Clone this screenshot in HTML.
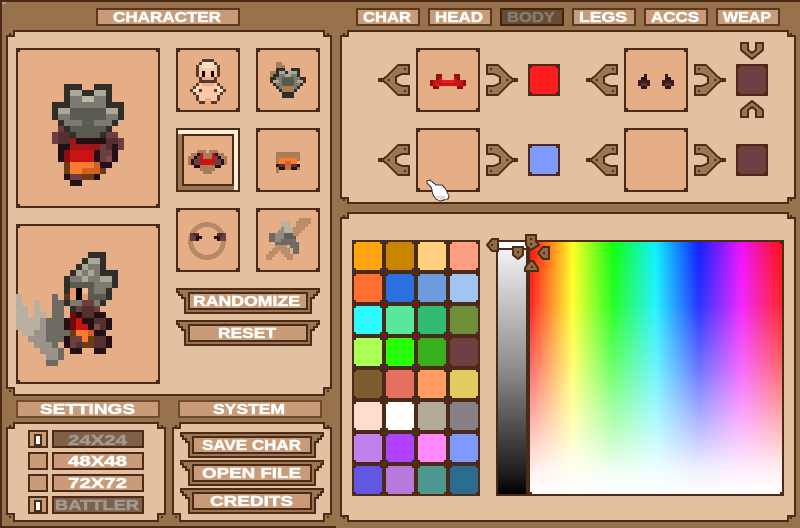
<!DOCTYPE html>
<html>
<head>
<meta charset="utf-8">
<title>Character</title>
<style>
html,body{margin:0;padding:0;width:800px;height:528px;overflow:hidden;background:#97724d}
svg{display:block}
text{font-family:"Liberation Sans",sans-serif;font-weight:bold;font-size:15px;fill:#fff;stroke:#fff;stroke-width:.5px}
text.g{fill:#a09a94;stroke:#a09a94}
text.b{fill:#857b6e;stroke:#857b6e}
path{fill:none}
</style>
</head>
<body>
<svg width="800" height="528" viewBox="0 0 800 528" xmlns="http://www.w3.org/2000/svg">
<defs>
<linearGradient id="gy" x1="0" y1="0" x2="0" y2="1">
<stop offset="0" stop-color="#f2f2f6"/><stop offset=".25" stop-color="#bdbdbd"/><stop offset=".5" stop-color="#8a8a8a"/><stop offset=".75" stop-color="#484848"/><stop offset=".92" stop-color="#1c1c1c"/><stop offset="1" stop-color="#000"/>
</linearGradient>
<linearGradient id="hue" x1="0" y1="0" x2="1" y2="0">
<stop offset="0" stop-color="#ff1010"/><stop offset=".17" stop-color="#ffff20"/><stop offset=".33" stop-color="#10ff10"/><stop offset=".5" stop-color="#10f0ff"/><stop offset=".67" stop-color="#1020ff"/><stop offset=".84" stop-color="#f010ff"/><stop offset="1" stop-color="#ff1010"/>
</linearGradient>
<linearGradient id="fade" x1="0" y1="0" x2="0" y2="1">
<stop offset="0" stop-color="#fff" stop-opacity="0"/><stop offset=".25" stop-color="#fff" stop-opacity=".1"/><stop offset=".5" stop-color="#fff" stop-opacity=".38"/><stop offset=".75" stop-color="#fff" stop-opacity=".72"/><stop offset=".9" stop-color="#fff" stop-opacity=".93"/><stop offset="1" stop-color="#fff" stop-opacity="1"/>
</linearGradient>
<pattern id="cn" x="352" y="240" width="32" height="32" patternUnits="userSpaceOnUse">
<rect x="2" y="2" width="2" height="2" fill="#4b2b17"/><rect x="28" y="2" width="2" height="2" fill="#4b2b17"/><rect x="2" y="28" width="2" height="2" fill="#4b2b17"/><rect x="28" y="28" width="2" height="2" fill="#4b2b17"/>
</pattern>
<g id="ban" shape-rendering="crispEdges">
<polygon points="1,1 143,1 143,4 141,4 141,7 138,7 138,10 135,10 135,25 9,25 9,10 6,10 6,7 3,7 3,4 1,4" fill="#9b7650" stroke="#4b2b17" stroke-width="2"/>
<rect x="13" y="5" width="118" height="16" fill="#c99b79" stroke="#4b2b17" stroke-width="2"/>
</g>
<g id="arr" shape-rendering="crispEdges">
<polygon points="20,1 31,1 31,10 24,10 18,13 18,19 24,22 31,22 31,31 20,31 17,28 14,25 11,22 8,19 5,17 1,17 1,15 5,15 8,13 11,10 14,7 17,4" fill="#9b7650" stroke="#4b2b17" stroke-width="2"/>
<rect x="26" y="4" width="2" height="2" fill="#4b2b17"/><rect x="26" y="26" width="2" height="2" fill="#4b2b17"/><rect x="10" y="15" width="2" height="2" fill="#4b2b17"/>
</g>
</defs>

<g shape-rendering="crispEdges">
<rect width="800" height="528" fill="#97724d"/>
<rect width="800" height="2" fill="#4b2b17"/>
<rect width="2" height="528" fill="#4b2b17"/>
<rect y="526" width="336" height="2" fill="#4b2b17"/>
<rect x="2" y="2" width="4" height="2" fill="#c49a72"/>

<!-- panels -->
<g fill="#e3c1a0" stroke="#4b2b17" stroke-width="2">
<polygon points="14,31 324,31 324,36 331,36 331,388 324,388 324,395 14,395 14,388 7,388 7,36 14,36"/>
<polygon points="14,423 158,423 158,428 165,428 165,514 158,514 158,521 14,521 14,514 7,514 7,428 14,428"/>
<polygon points="180,423 324,423 324,428 331,428 331,514 324,514 324,521 180,521 180,514 173,514 173,428 180,428"/>
<polygon points="347,31 787,31 787,36 794,36 794,198 787,198 787,203 347,203 347,198 340,198 340,36 347,36" transform="translate(1 0)"/>
<polygon points="347,213 787,213 787,218 794,218 794,516 787,516 787,521 347,521 347,516 340,516 340,218 347,218" transform="translate(1 0)"/>
</g>
<g fill="#4b2b17">
<rect x="9" y="33" width="2" height="2"/><rect x="327" y="33" width="2" height="2"/><rect x="9" y="390" width="2" height="2"/><rect x="327" y="390" width="2" height="2"/>
<rect x="9" y="425" width="2" height="2"/><rect x="161" y="425" width="2" height="2"/><rect x="9" y="516" width="2" height="2"/><rect x="161" y="516" width="2" height="2"/>
<rect x="175" y="425" width="2" height="2"/><rect x="327" y="425" width="2" height="2"/><rect x="175" y="516" width="2" height="2"/><rect x="327" y="516" width="2" height="2"/>
<rect x="343" y="33" width="2" height="2"/><rect x="790" y="33" width="2" height="2"/><rect x="343" y="199" width="2" height="2"/><rect x="790" y="199" width="2" height="2"/>
<rect x="343" y="215" width="2" height="2"/><rect x="790" y="215" width="2" height="2"/><rect x="343" y="517" width="2" height="2"/><rect x="790" y="517" width="2" height="2"/>
</g>

<!-- title and tabs -->
<g fill="#c99b79" stroke="#5a3820" stroke-width="2">
<rect x="97" y="9" width="142" height="16"/>
<rect x="357" y="9" width="62" height="16"/>
<rect x="429" y="9" width="62" height="16"/>
<rect x="573" y="9" width="62" height="16"/>
<rect x="645" y="9" width="62" height="16"/>
<rect x="717" y="9" width="62" height="16"/>
<rect x="17" y="401" width="142" height="16" stroke="#704a2c"/>
<rect x="179" y="401" width="142" height="16" stroke="#704a2c"/>
</g>
<rect x="501" y="9" width="62" height="16" fill="#6a4a30" stroke="#3f2412" stroke-width="2"/>

<!-- slots -->
<g fill="#e5ae87" stroke="#4b2b17" stroke-width="2">
<rect x="17" y="49" width="142" height="158"/>
<rect x="17" y="225" width="142" height="158"/>
<rect x="177" y="49" width="62" height="62"/>
<rect x="257" y="49" width="62" height="62"/>
<rect x="257" y="129" width="62" height="62"/>
<rect x="177" y="209" width="62" height="62"/>
<rect x="257" y="209" width="62" height="62"/>
<rect x="417" y="49" width="62" height="62"/>
<rect x="417" y="129" width="62" height="62"/>
<rect x="625" y="49" width="62" height="62"/>
<rect x="625" y="129" width="62" height="62"/>
</g>
<g fill="#4b2b17">
<rect x="18" y="50" width="2" height="2"/><rect x="156" y="50" width="2" height="2"/><rect x="18" y="204" width="2" height="2"/><rect x="156" y="204" width="2" height="2"/>
<rect x="18" y="226" width="2" height="2"/><rect x="156" y="226" width="2" height="2"/><rect x="18" y="380" width="2" height="2"/><rect x="156" y="380" width="2" height="2"/>
</g>
<path stroke="#4b2b17" stroke-width="2" d="M178 51h2M236 51h2M178 109h2M236 109h2M258 51h2M316 51h2M258 109h2M316 109h2M258 131h2M316 131h2M258 189h2M316 189h2M178 211h2M236 211h2M178 269h2M236 269h2M258 211h2M316 211h2M258 269h2M316 269h2M418 51h2M476 51h2M418 109h2M476 109h2M418 131h2M476 131h2M418 189h2M476 189h2M626 51h2M684 51h2M626 109h2M684 109h2M626 131h2M684 131h2M626 189h2M684 189h2"/>

<!-- selected slot -->
<rect x="176" y="128" width="64" height="64" fill="#4b2b17"/>
<rect x="178" y="130" width="60" height="60" fill="#9b7650"/>
<polygon points="178,130 238,130 238,190 234,190 234,134 178,134" fill="#fff0dc"/>
<rect x="183" y="135" width="50" height="50" fill="#e5ae87" stroke="#4b2b17" stroke-width="2"/>

<!-- large sprite front -->
<g transform="translate(52 84) scale(6)">
<path stroke="#2f2e2a" d="M2 .5h3M7 .5h3M2 1.5h1M5 1.5h2M9 1.5h1M2 2.5h1M9 2.5h1M0 3.5h3M9 3.5h3M0 4.5h1M11 4.5h1M0 5.5h1M11 5.5h1M1 6.5h1M10 6.5h1M2 7.5h1M9 7.5h1M3 8.5h1M8 8.5h1"/>
<path stroke="#aaa698" d="M3 1.5h2M7 1.5h2M1 4.5h2M9 4.5h2"/>
<path stroke="#bdb7a7" d="M5 2.5h2"/>
<path stroke="#7d7b6f" d="M3 2.5h2M7 2.5h2M3 3.5h6M1 5.5h2M9 5.5h2M2 6.5h3M7 6.5h3"/>
<path stroke="#5b5a50" d="M3 4.5h6M3 5.5h6M5 6.5h2M3 7.5h6M4 8.5h4"/>
<path stroke="#6b3f3f" d="M1 7.5h1M0 8.5h1M9 8.5h2M0 9.5h1M11 9.5h1M11 10.5h1M8 10.5h1M8 11.5h2M8 12.5h1M3 15.5h2"/>
<path stroke="#543030" d="M1 8.5h2M1 9.5h2M9 9.5h2M9 10.5h1"/>
<path stroke="#241014" d="M1 10.5h2M1 11.5h1M1 12.5h1M4 9.5h5M10 10.5h1M7 11.5h1M7 12.5h1M10 11.5h1M10 12.5h1M8 13.5h2M2 15.5h1M7 15.5h1M3 16.5h2"/>
<path stroke="#a01616" d="M3 9.5h1M3 10.5h5"/>
<path stroke="#cc1212" d="M3 11.5h4M3 12.5h4"/>
<path stroke="#8c0f0f" d="M2 11.5h1M2 12.5h1"/>
<path stroke="#6e3a16" d="M2 13.5h1M2 14.5h1M8 14.5h1M5 15.5h2"/>
<path stroke="#ff7a2e" d="M3 13.5h4M3 14.5h2"/>
<path stroke="#d06020" d="M7 13.5h1M5 14.5h3"/>
<path stroke="#7e4a4a" d="M9 12.5h1"/>
</g>

<!-- large sprite side -->
<g transform="translate(16 252) scale(6)">
<path stroke="#b8b0a0" d="M0 7.5h1M0 8.5h1M3 8.5h1M0 9.5h2M3 9.5h1M0 10.5h2M3 10.5h2M0 11.5h4M0 12.5h4M1 13.5h2"/>
<path stroke="#99938a" d="M4 11.5h1M4 12.5h1M3 13.5h2M2 14.5h3M3 15.5h3M4 16.5h3M5 17.5h2"/>
<path stroke="#6e6c62" d="M6 7.5h1M6 8.5h2M6 9.5h2M6 10.5h2M5 11.5h3M5 12.5h3M5 13.5h4M5 14.5h4M6 15.5h1M7 16.5h1M7 17.5h1M5 18.5h2"/>
<path stroke="#2f2e2a" d="M12 .5h3M11 1.5h1M14 1.5h1M10 2.5h1M14 2.5h1M9 3.5h1M14 3.5h3M8 4.5h1M16 4.5h1M8 5.5h1M16 5.5h1M8 6.5h1M15 6.5h1M15 7.5h1M8 8.5h1M14 8.5h1M9 9.5h1"/>
<path stroke="#aaa698" d="M12 1.5h2M11 2.5h1M10 3.5h1M12 3.5h1M11 4.5h1M14 4.5h2"/>
<path stroke="#7d7b6f" d="M12 2.5h2M11 3.5h1M13 3.5h1M9 4.5h2M12 4.5h2M13 5.5h2M15 5.5h1M13 6.5h2M9 8.5h2M13 8.5h1"/>
<path stroke="#5b5a50" d="M9 5.5h4M12 6.5h1M12 7.5h3"/>
<path stroke="#e89a6e" d="M9 6.5h1M9 7.5h1M11 7.5h1"/>
<path stroke="#f4b890" d="M11 6.5h1"/>
<path stroke="#000" d="M10 6.5h1M10 7.5h1"/>
<path stroke="#5a3626" d="M8 7.5h1"/>
<path stroke="#6b3f3f" d="M11 8.5h2M10 9.5h1M13 9.5h1M9 14.5h2M9 15.5h1"/>
<path stroke="#543030" d="M11 9.5h2M11 10.5h2M13 11.5h2M14 12.5h1M13 14.5h2M13 15.5h2M10 15.5h1"/>
<path stroke="#241014" d="M10 10.5h1M13 10.5h2M8 11.5h1M8 12.5h1M11 11.5h2M12 12.5h1M15 11.5h1M15 12.5h1M13 13.5h2M8 14.5h1M8 15.5h1M15 14.5h1M15 15.5h1M9 16.5h2M13 16.5h2"/>
<path stroke="#700a0a" d="M9 10.5h1M9 11.5h1M9 12.5h1"/>
<path stroke="#cc1212" d="M10 11.5h1M10 12.5h2"/>
<path stroke="#ff7a2e" d="M10 13.5h2M11 14.5h1"/>
<path stroke="#d06020" d="M12 13.5h1"/>
<path stroke="#6e3a16" d="M9 13.5h1M12 14.5h1M11 15.5h2"/>
<path stroke="#7e4a4a" d="M13 12.5h1"/>
</g>

<!-- base body -->
<g transform="translate(190 59) scale(3)">
<path stroke="#ffc8a8" d="M3 3.5h6M3 4.5h1M5 4.5h2M8 4.5h1M3 5.5h1M5 5.5h2M8 5.5h1M3 2.5h1M8 2.5h1M3 8.5h6M3 9.5h6M4 10.5h4M2 11.5h8M3 12.5h6M3 13.5h2M7 13.5h2"/>
<path stroke="#ffe0d0" d="M4 1.5h4M4 2.5h4M2 9.5h1M9 9.5h1M1 10.5h2M9 10.5h2"/>
<path stroke="#f0a888" d="M4 6.5h4M4 8.5h4M5 13.5h2"/>
<path stroke="#000" d="M4 4.5h1M7 4.5h1M4 5.5h1M7 5.5h1"/>
<path stroke="#5a3a28" d="M4 .5h4M3 1.5h1M8 1.5h1M2 2.5h1M9 2.5h1M2 3.5h1M9 3.5h1M2 4.5h1M9 4.5h1M2 5.5h1M9 5.5h1M3 6.5h1M8 6.5h1M3 7.5h6M2 8.5h1M9 8.5h1M1 9.5h1M10 9.5h1M0 10.5h1M11 10.5h1M3 10.5h1M8 10.5h1M1 11.5h1M10 11.5h1M2 12.5h1M9 12.5h1M2 13.5h1M9 13.5h1M3 14.5h2M7 14.5h2"/>
</g>

<!-- helmet -->
<g transform="translate(270 62) scale(3)">
<path stroke="#a67d56" d="M2 .5h2M2 1.5h3M0 3.5h2M0 4.5h1"/>
<path stroke="#2f2e2a" d="M2 2.5h3M7 2.5h3M2 3.5h1M5 3.5h1M9 3.5h1M1 4.5h2M9 4.5h1M0 5.5h2M10 5.5h2M0 6.5h1M11 6.5h1M1 7.5h1M10 7.5h1M2 8.5h1M9 8.5h1M3 9.5h1M8 9.5h1M4 10.5h4M4 11.5h4"/>
<path stroke="#aaa698" d="M3 3.5h2M6 3.5h3M1 6.5h2M9 6.5h2M5 4.5h2"/>
<path stroke="#7d7b6f" d="M3 4.5h2M7 4.5h2M2 5.5h2M8 5.5h2M3 6.5h1M8 6.5h1M2 7.5h2M8 7.5h2M3 8.5h1M8 8.5h1"/>
<path stroke="#5b5a50" d="M4 5.5h4M4 6.5h4M4 7.5h4"/>
<path stroke="#a67d56" d="M4 8.5h4M4 9.5h4"/>
</g>

<!-- body armor small -->
<g transform="translate(188 150) scale(3)">
<path stroke="#a67d56" d="M3 .5h3M7 .5h3M1 1.5h2M5 1.5h3M10 1.5h2M0 2.5h2M5 2.5h3M11 2.5h2M0 3.5h1M12 3.5h1M0 4.5h1M12 4.5h1M4 5.5h5M4 6.5h5M5 7.5h3"/>
<path stroke="#241014" d="M3 1.5h1M9 1.5h1M2 2.5h1M10 2.5h1M1 3.5h1M11 3.5h1M1 4.5h1M11 4.5h1M2 5.5h2M9 5.5h2"/>
<path stroke="#6b3f3f" d="M3 2.5h1M9 2.5h1M2 3.5h2M9 3.5h2M2 4.5h2M9 4.5h2"/>
<path stroke="#cc1212" d="M4 1.5h1M8 1.5h1M4 2.5h1M8 2.5h1M4 3.5h5M4 4.5h5"/>
</g>

<!-- legs small -->
<g transform="translate(276 152) scale(3)">
<path stroke="#a67d56" d="M0 .5h8M0 1.5h8M0 2.5h1M0 3.5h1M0 5.5h1M7 5.5h1M0 6.5h1M3 5.5h2M7 2.5h1"/>
<path stroke="#ff7a2e" d="M1 2.5h6M1 3.5h2M5 3.5h2"/>
<path stroke="#c96a2a" d="M3 3.5h2M3 4.5h2"/>
<path stroke="#241014" d="M0 4.5h1M7 4.5h1M1 5.5h2M5 5.5h2"/>
<path stroke="#5a3030" d="M1 4.5h2M5 4.5h2"/>
</g>

<!-- ring accessory -->
<circle cx="207" cy="241" r="16.5" fill="none" stroke="#b38a62" stroke-width="5"/>
<rect x="190" y="233" width="9" height="8" fill="#6b3f3f"/>
<rect x="193" y="233" width="6" height="3" fill="#54282c"/>
<rect x="196" y="236" width="6" height="3" fill="#241014"/>
<rect x="196" y="239" width="3" height="2" fill="#241014"/>
<rect x="217" y="233" width="9" height="8" fill="#6b3f3f"/>
<rect x="217" y="233" width="6" height="3" fill="#54282c"/>
<rect x="214" y="236" width="6" height="3" fill="#241014"/>
<rect x="217" y="239" width="3" height="2" fill="#241014"/>

<!-- weapon icon -->
<g transform="translate(266 218) scale(3)">
<path stroke="#b88f67" d="M11 .5h4M10 1.5h5M10 2.5h4M9 3.5h4M9 4.5h3M9 5.5h2M8 6.5h2M4 8.5h4M3 9.5h4M2 10.5h6M1 11.5h3M5 11.5h3M0 12.5h3M6 12.5h3M0 13.5h2M7 13.5h2"/>
<path stroke="#b8b0a0" d="M5 1.5h3M5 2.5h3M6 3.5h3M6 4.5h3"/>
<path stroke="#8e8b80" d="M5 3.5h1M4 4.5h2M3 5.5h3M3 6.5h3M3 7.5h2"/>
<path stroke="#6e6c62" d="M1 5.5h2M1 6.5h2M1 7.5h2M3 8.5h3M8 9.5h3M9 10.5h2M9 11.5h2M6 8.5h5M5 7.5h5"/>
<path stroke="#5f5d54" d="M6 5.5h3M6 6.5h4"/>
</g>

<!-- red top sprite -->
<g transform="translate(430 74) scale(3)">
<path stroke="#8c0f0f" d="M2 .5h2M8 .5h2M2 1.5h1M9 1.5h1M0 2.5h1M11 2.5h1M0 3.5h1M11 3.5h1M1 4.5h2M9 4.5h2"/>
<path stroke="#cc1212" d="M3 1.5h1M8 1.5h1M1 2.5h3M8 2.5h3M1 3.5h1M3 3.5h6M9 3.5h2"/>
<path stroke="#ee1a1a" d="M4 2.5h4M2 3.5h1"/>
</g>

<!-- eye sprite -->
<g transform="translate(638 74) scale(3)">
<path stroke="#2c1414" d="M2 .5h1M9 .5h1M1 1.5h2M9 1.5h2M1 4.5h2M9 4.5h2"/>
<path stroke="#3a1c1c" d="M0 2.5h4M8 2.5h4M0 3.5h1M3 3.5h1M8 3.5h1M11 3.5h1"/>
<path stroke="#5a3030" d="M1 3.5h2M9 3.5h2"/>
</g>
</g>

<!-- arrows -->
<use href="#arr" x="378" y="64"/>
<use href="#arr" x="378" y="144"/>
<use href="#arr" x="586" y="64"/>
<use href="#arr" x="586" y="144"/>
<use href="#arr" transform="translate(518 64) scale(-1 1)"/>
<use href="#arr" transform="translate(518 144) scale(-1 1)"/>
<use href="#arr" transform="translate(726 64) scale(-1 1)"/>
<use href="#arr" transform="translate(726 144) scale(-1 1)"/>

<g shape-rendering="crispEdges">
<polygon points="741,43 748,43 748,50 752,53 756,50 756,43 763,43 763,50 757,55 752,59 747,55 741,50" fill="#9b7650" stroke="#4b2b17" stroke-width="2"/>
<polygon points="741,117 748,117 748,110 752,107 756,110 756,117 763,117 763,110 757,105 752,101 747,105 741,110" fill="#9b7650" stroke="#4b2b17" stroke-width="2"/>
<!-- swatches -->
<rect x="529" y="65" width="30" height="30" fill="#ff1c1c" stroke="#4b2b17" stroke-width="2"/>
<rect x="529" y="145" width="30" height="30" fill="#7f9bff" stroke="#4b2b17" stroke-width="2"/>
<rect x="737" y="65" width="30" height="30" fill="#703f3f" stroke="#4b2b17" stroke-width="2"/>
<rect x="737" y="145" width="30" height="30" fill="#703f3f" stroke="#4b2b17" stroke-width="2"/>
<path stroke="#4b2b17" stroke-width="2" d="M530 67h2M556 67h2M530 93h2M556 93h2M530 147h2M556 147h2M530 173h2M556 173h2M738 67h2M764 67h2M738 93h2M764 93h2M738 147h2M764 147h2M738 173h2M764 173h2"/>

<!-- palette -->
<rect x="352" y="240" width="128" height="256" fill="#4b2b17"/>
<g>
<rect x="354" y="242" width="28" height="28" fill="#ffa50d"/><rect x="386" y="242" width="28" height="28" fill="#c88600"/><rect x="418" y="242" width="28" height="28" fill="#ffd07f"/><rect x="450" y="242" width="28" height="28" fill="#ff9f80"/>
<rect x="354" y="274" width="28" height="28" fill="#ff7030"/><rect x="386" y="274" width="28" height="28" fill="#2a70e0"/><rect x="418" y="274" width="28" height="28" fill="#6c9ce0"/><rect x="450" y="274" width="28" height="28" fill="#9fc5f0"/>
<rect x="354" y="306" width="28" height="28" fill="#30f8ff"/><rect x="386" y="306" width="28" height="28" fill="#58e89c"/><rect x="418" y="306" width="28" height="28" fill="#30bc70"/><rect x="450" y="306" width="28" height="28" fill="#6f9038"/>
<rect x="354" y="338" width="28" height="28" fill="#a8ff58"/><rect x="386" y="338" width="28" height="28" fill="#28ff00"/><rect x="418" y="338" width="28" height="28" fill="#3ab020"/><rect x="450" y="338" width="28" height="28" fill="#703f3f"/>
<rect x="354" y="370" width="28" height="28" fill="#7f5c30"/><rect x="386" y="370" width="28" height="28" fill="#e87060"/><rect x="418" y="370" width="28" height="28" fill="#ff9c60"/><rect x="450" y="370" width="28" height="28" fill="#e3cd60"/>
<rect x="354" y="402" width="28" height="28" fill="#ffdccc"/><rect x="386" y="402" width="28" height="28" fill="#ffffff"/><rect x="418" y="402" width="28" height="28" fill="#b4a898"/><rect x="450" y="402" width="28" height="28" fill="#888088"/>
<rect x="354" y="434" width="28" height="28" fill="#c080f0"/><rect x="386" y="434" width="28" height="28" fill="#b040ff"/><rect x="418" y="434" width="28" height="28" fill="#ff88ff"/><rect x="450" y="434" width="28" height="28" fill="#8098ff"/>
<rect x="354" y="466" width="28" height="28" fill="#6058e0"/><rect x="386" y="466" width="28" height="28" fill="#b878dc"/><rect x="418" y="466" width="28" height="28" fill="#4c9890"/><rect x="450" y="466" width="28" height="28" fill="#2c6c90"/>
</g>
<rect x="352" y="240" width="128" height="256" fill="url(#cn)"/>

<!-- grey bar -->
<rect x="496" y="240" width="34" height="256" fill="#4b2b17"/>
<rect x="498" y="242" width="28" height="6" fill="#fff"/>
<rect x="498" y="250" width="28" height="244" fill="url(#gy)"/>

<!-- colour field -->
<rect x="526" y="240" width="258" height="256" fill="#4b2b17"/>
<rect x="530" y="242" width="252" height="252" fill="url(#hue)"/>
<rect x="530" y="242" width="252" height="252" fill="url(#fade)"/>
<rect x="530" y="242" width="2" height="2" fill="#4b2b17"/><rect x="780" y="242" width="2" height="2" fill="#4b2b17"/><rect x="530" y="492" width="2" height="2" fill="#4b2b17"/><rect x="780" y="492" width="2" height="2" fill="#4b2b17"/>

<!-- slider handles -->
<g fill="#8f6b47" stroke="#4b2b17" stroke-width="2">
<polygon points="487,245 492,239 498,239 498,251 492,251"/>
<polygon points="513,247 523,247 523,255 518,259 513,255"/>
<polygon points="526,235 536,235 536,241 539,245 531,250 526,245"/>
<polygon points="549,247 549,259 543,259 538,253 543,247"/>
<polygon points="525,268 530,261 533,261 538,268 538,271 525,271"/>
</g>
<g fill="#4b2b17">
<rect x="491" y="244" width="2" height="2"/><rect x="517" y="251" width="2" height="2"/><rect x="530" y="238" width="2" height="2"/><rect x="530" y="243" width="2" height="2"/><rect x="543" y="252" width="2" height="2"/><rect x="531" y="266" width="2" height="2"/>
</g>

<!-- banners -->
<use href="#ban" x="176" y="288"/>
<use href="#ban" x="176" y="320"/>
<use href="#ban" x="180" y="432"/>
<use href="#ban" x="180" y="460"/>
<use href="#ban" x="180" y="488"/>

<!-- settings rows -->
<g fill="#c99b79" stroke="#4b2b17" stroke-width="2">
<rect x="29" y="431" width="18" height="16"/>
<rect x="29" y="453" width="18" height="16"/>
<rect x="29" y="475" width="18" height="16"/>
<rect x="29" y="497" width="18" height="16"/>
<rect x="53" y="453" width="90" height="16"/>
<rect x="53" y="475" width="90" height="16"/>
<rect x="53" y="431" width="90" height="16" fill="#806046"/>
<rect x="53" y="497" width="90" height="16" fill="#806046"/>
</g>
<rect x="34" y="434" width="8" height="12" fill="#4b2b17"/><rect x="36" y="436" width="4" height="8" fill="#fff"/>
<rect x="34" y="500" width="8" height="12" fill="#4b2b17"/><rect x="36" y="502" width="4" height="8" fill="#fff"/>
</g>

<!-- hand cursor -->
<g shape-rendering="crispEdges">
<polygon points="427,181 430,180 436,185 442,185 445,188 447,192 449,196 448,199 440,201 436,199 433,195 432,190 431,187 427,183" fill="#fff" stroke="#333" stroke-width="1"/>
<path stroke="#b8b8b8" stroke-width="1" d="M436 197h9M440 199h7"/>
</g>

<!-- text -->
<text x="113" y="22" textLength="108" lengthAdjust="spacingAndGlyphs">CHARACTER</text>
<text x="363" y="22" textLength="48" lengthAdjust="spacingAndGlyphs">CHAR</text>
<text x="435" y="22" textLength="48" lengthAdjust="spacingAndGlyphs">HEAD</text>
<text class="b" x="507" y="22" textLength="48" lengthAdjust="spacingAndGlyphs">BODY</text>
<text x="579" y="22" textLength="48" lengthAdjust="spacingAndGlyphs">LEGS</text>
<text x="651" y="22" textLength="48" lengthAdjust="spacingAndGlyphs">ACCS</text>
<text x="723" y="22" textLength="48" lengthAdjust="spacingAndGlyphs">WEAP</text>
<text x="193" y="306" textLength="107" lengthAdjust="spacingAndGlyphs">RANDOMIZE</text>
<text x="218" y="338" textLength="58" lengthAdjust="spacingAndGlyphs">RESET</text>
<text x="40" y="414" textLength="95" lengthAdjust="spacingAndGlyphs">SETTINGS</text>
<text x="213" y="414" textLength="72" lengthAdjust="spacingAndGlyphs">SYSTEM</text>
<text class="g" x="68" y="445" textLength="59" lengthAdjust="spacingAndGlyphs">24X24</text>
<text x="68" y="466" textLength="59" lengthAdjust="spacingAndGlyphs">48X48</text>
<text x="68" y="488" textLength="59" lengthAdjust="spacingAndGlyphs">72X72</text>
<text class="g" x="55" y="510" textLength="84" lengthAdjust="spacingAndGlyphs">BATTLER</text>
<text x="202" y="450" textLength="99" lengthAdjust="spacingAndGlyphs">SAVE CHAR</text>
<text x="202" y="478" textLength="99" lengthAdjust="spacingAndGlyphs">OPEN FILE</text>
<text x="210" y="506" textLength="83" lengthAdjust="spacingAndGlyphs">CREDITS</text>
</svg>
</body>
</html>
